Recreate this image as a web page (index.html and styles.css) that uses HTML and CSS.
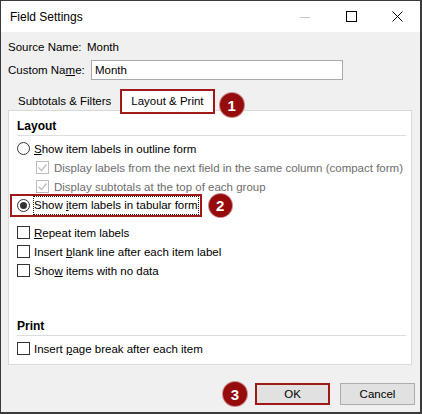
FILE: index.html
```html
<!DOCTYPE html>
<html lang="en">
  <head>
    <meta charset="UTF-8" />
    <meta name="viewport" content="width=device-width, initial-scale=1.0" />
    <title>Field Settings</title>
    <link rel="stylesheet" href="styles.css">
  </head>
  <body>
    <div class="window">
      <header class="titlebar">
        <span class="title">Field Settings</span>
        <div class="caption-buttons">
          <span class="cap-btn">
            <svg width="10" height="10" viewBox="0 0 10 10"><path d="M0 5.5h10" stroke="#c4c4c4" /></svg>
          </span>
          <span class="cap-btn">
            <svg width="11" height="11" viewBox="0 0 11 11"><rect x="0.5" y="0.5" width="10" height="10" fill="none" stroke="#000" /></svg>
          </span>
          <span class="cap-btn">
            <svg width="11" height="11" viewBox="0 0 11 11"><path d="M0.5 0.5l10 10M10.5 0.5l-10 10" stroke="#000" /></svg>
          </span>
        </div>
      </header>

      <main class="dialog">
        <div class="name-row source-row">
          <span class="name-label">Source Name:</span>
          <span>Month</span>
        </div>
        <div class="name-row custom-row">
          <label class="name-label" for="custom-name">Custom Na<u>m</u>e:</label>
          <input class="text-input" id="custom-name" type="text" value="Month" />
        </div>

        <div class="tabs">
          <span class="tab">Subtotals &amp; Filters</span>
          <span class="tab tab-active">Layout &amp; Print</span>
          <span class="step step-tab">1</span>
        </div>

        <section class="panel">
          <h3 class="group-title">Layout</h3>

          <div class="option">
            <svg class="radio" width="13" height="13" viewBox="0 0 13 13"><circle cx="6.5" cy="6.5" r="6" fill="#fff" stroke="#333" /></svg>
            <span><u>S</u>how item labels in outline form</span>
          </div>
          <div class="option option-sub disabled">
            <span class="checkbox">
              <svg width="11" height="11" viewBox="0 0 11 11"><path d="M1.5 5.5l3 3 5-6" fill="none" stroke="#bcbcbc" stroke-width="1.2" /></svg>
            </span>
            <span>Display labels from the next field in the same column (compact form)</span>
          </div>
          <div class="option option-sub disabled">
            <span class="checkbox">
              <svg width="11" height="11" viewBox="0 0 11 11"><path d="M1.5 5.5l3 3 5-6" fill="none" stroke="#bcbcbc" stroke-width="1.2" /></svg>
            </span>
            <span>Display subtotals at the top of each group</span>
          </div>
          <div class="option-callout">
            <div class="option option-marked">
              <svg class="radio" width="13" height="13" viewBox="0 0 13 13"><circle cx="6.5" cy="6.5" r="6" fill="#fff" stroke="#333" /><circle cx="6.5" cy="6.5" r="3.5" fill="#333" /></svg>
              <span class="focus-text">Show <u>i</u>tem labels in tabular form</span>
            </div>
            <span class="step step-option">2</span>
          </div>

          <div class="option-group">
            <div class="option">
              <span class="checkbox"></span>
              <span><u>R</u>epeat item labels</span>
            </div>
            <div class="option">
              <span class="checkbox"></span>
              <span>Insert <u>b</u>lank line after each item label</span>
            </div>
            <div class="option">
              <span class="checkbox"></span>
              <span>Sho<u>w</u> items with no data</span>
            </div>
          </div>

          <h3 class="group-title print-title">Print</h3>
          <div class="option">
            <span class="checkbox"></span>
            <span>Insert <u>p</u>age break after each item</span>
          </div>
        </section>

        <footer class="buttons">
          <span class="step step-button">3</span>
          <button class="btn btn-ok" type="button">OK</button>
          <button class="btn" type="button">Cancel</button>
        </footer>
      </main>
    </div>
  </body>
</html>
```

FILE: styles.css
```css
body {
  margin: 0;
  font-family: "Liberation Sans", Arial, sans-serif;
  font-size: 11.5px;
  color: #000;
}

.window {
  width: 422px;
  height: 414px;
  box-sizing: border-box;
  border: 1px solid #3a3a3a;
  border-right-width: 2px;
  border-bottom-width: 2px;
  display: flex;
  flex-direction: column;
  background: #f0f0f0;
  overflow: hidden;
}

/* title bar */

.titlebar {
  height: 31px;
  flex: none;
  display: flex;
  align-items: center;
  background: #fff;
}

.title {
  flex: 1;
  padding-left: 9px;
  font-size: 12px;
}

.caption-buttons {
  display: flex;
  height: 100%;
}

.cap-btn {
  width: 46px;
  display: flex;
  align-items: center;
  justify-content: center;
}

/* dialog body */

.dialog {
  flex: 1;
  min-height: 0;
  padding: 0 7px 0 7px;
  display: flex;
  flex-direction: column;
}

.name-row {
  display: flex;
  align-items: center;
  white-space: nowrap;
}

.name-label {
  flex: none;
}

.source-row {
  margin-top: 6px;
  height: 17px;
}

.source-row .name-label {
  width: 79px;
}

.custom-row {
  margin-top: 5px;
}

.custom-row .name-label {
  width: 83px;
}

.text-input {
  width: 252px;
  height: 20px;
  box-sizing: border-box;
  margin: 0;
  padding: 0 3px;
  border: 1px solid #a9a9a9;
  font: inherit;
  color: #000;
  background: #fff;
}

/* tabs */

.tabs {
  margin-top: 9px;
  display: flex;
  align-items: flex-end;
  white-space: nowrap;
}

.tab {
  margin-left: 2px;
  padding: 0 7px 0 8px;
  line-height: 18px;
}

.tab-active {
  position: relative;
  z-index: 1;
  margin-left: 2px;
  margin-bottom: -4px;
  padding: 2px 9px 3px;
  line-height: 16px;
  border: 2px solid #a01818;
  background: #fff;
}

/* numbered callouts */

.step {
  width: 24px;
  height: 24px;
  flex: none;
  border-radius: 50%;
  background: #960c0c;
  box-shadow: 0 0 0 1px #c98a8a;
  color: #fff;
  font-family: "Liberation Sans", sans-serif;
  font-weight: bold;
  font-size: 15px;
  display: flex;
  align-items: center;
  justify-content: center;
}

.step-tab {
  position: relative;
  z-index: 2;
  margin-left: 5px;
  margin-bottom: -7px;
}

.step-option {
  margin: -2px 0 -2px 9px;
  width: 23px;
  height: 23px;
}

/* options panel */

.panel {
  flex: none;
  margin-right: 1px;
  height: 255px;
  box-sizing: border-box;
  padding: 7px 5px 0 8px;
  border: 1px solid #d9d9d9;
  background: #fff;
}

.group-title {
  margin: 0;
  font-size: 12px;
  font-weight: bold;
  line-height: 17px;
  border-bottom: 1px solid #dcdcdc;
}

.print-title {
  margin-top: 38px;
}

.option {
  height: 19px;
  display: flex;
  align-items: center;
  gap: 4px;
  white-space: nowrap;
}

.group-title + .option {
  margin-top: 3px;
}

.option-sub {
  padding-left: 19px;
  gap: 5px;
}

.disabled {
  color: #6d6d6d;
}

.radio {
  flex: none;
}

.checkbox {
  width: 13px;
  height: 13px;
  box-sizing: border-box;
  flex: none;
  border: 1px solid #333;
  background: #fff;
  display: flex;
  align-items: center;
  justify-content: center;
}

.disabled .checkbox {
  border-color: #bcbcbc;
}

.option-callout {
  display: flex;
  align-items: center;
}

.option-marked {
  margin-left: -5px;
  padding: 0 2px 0 5px;
  outline: 2px solid #a01818;
}

.focus-text {
  outline: 1px dotted #222;
  line-height: 17px;
}

.option-group {
  margin-top: 8px;
}

/* footer buttons */

.buttons {
  flex: none;
  margin-top: 17px;
  margin-right: -2px;
  display: flex;
  align-items: center;
  justify-content: flex-end;
  gap: 10px;
}

.buttons .step {
  margin-right: -2px;
}

.btn {
  width: 75px;
  height: 22px;
  margin: 0;
  padding: 0;
  border: 1px solid #adadad;
  background: #e1e1e1;
  font: inherit;
  color: #000;
}

.btn-ok {
  border: 2px solid #a01818;
}
```
